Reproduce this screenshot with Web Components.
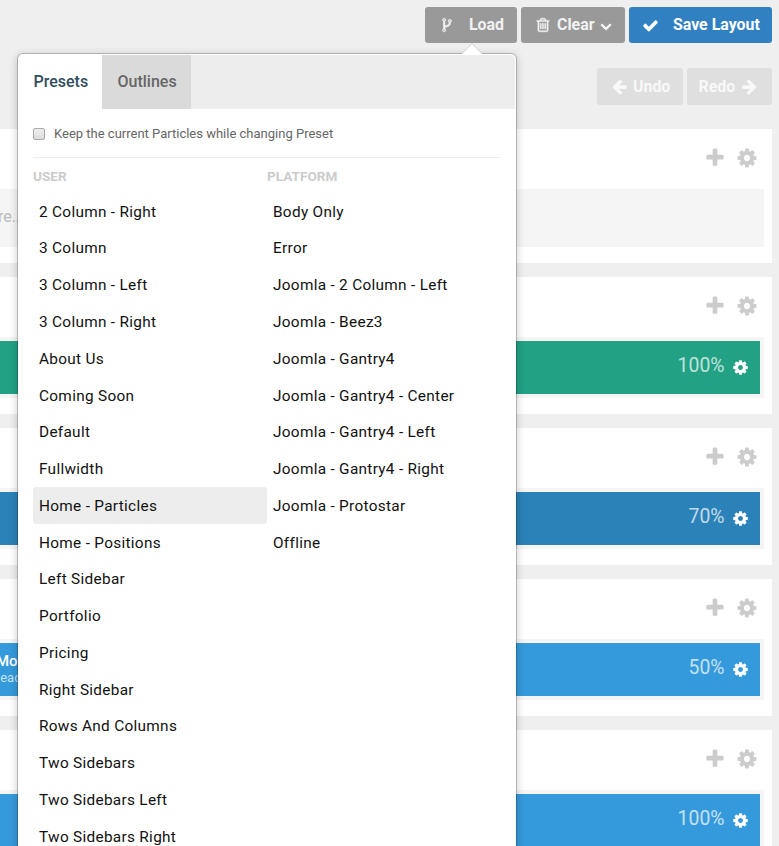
<!DOCTYPE html>
<html lang="en">
<head>
<meta charset="utf-8">
<title>Layout Manager</title>
<style>
html,body{margin:0;height:846px;overflow:hidden;background:#efefef;font-family:Roboto,"Liberation Sans",sans-serif}
</style>
</head>
<body>
<layout-page></layout-page>
<script>
const ICONS = {
plus:'M1600 736v192q0 40-28 68t-68 28h-416v416q0 40-28 68t-68 28h-192q-40 0-68-28t-28-68v-416h-416q-40 0-68-28t-28-68v-192q0-40 28-68t68-28h416v-416q0-40 28-68t68-28h192q40 0 68 28t28 68v416h416q40 0 68 28t28 68z',
cog:'M1152 896q0-106-75-181t-181-75-181 75-75 181 75 181 181 75 181-75 75-181zm512-109v222q0 12-8 23t-20 13l-185 28q-19 54-39 91 35 50 107 138 10 12 10 25t-9 23q-27 37-99 108t-94 71q-12 0-26-9l-138-108q-44 23-91 38-16 136-29 186-7 28-36 28h-222q-14 0-24.5-8.5t-11.5-21.5l-28-184q-49-16-90-37l-141 107q-10 9-25 9-14 0-25-11-126-114-165-168-7-10-7-23 0-12 8-23 15-21 51-66.5t54-70.5q-27-50-41-99l-183-27q-13-2-21-12.5t-8-23.5v-222q0-12 8-23t19-13l186-28q14-46 39-92-40-57-107-138-10-12-10-24 0-10 9-23 26-36 98.5-107.5t94.5-71.5q13 0 26 10l138 107q44-23 91-38 16-136 29-186 7-28 36-28h222q14 0 24.5 8.5t11.5 21.5l28 184q49 16 90 37l142-107q9-9 24-9 13 0 25 10 129 119 165 170 7 8 7 22 0 12-8 23-15 21-51 66.5t-54 70.5q26 50 41 98l183 28q13 2 21 12.5t8 23.5z',
check:'M1671 566q0 40-28 68l-724 724-136 136q-28 28-68 28t-68-28l-136-136-362-362q-28-28-28-68t28-68l136-136q28-28 68-28t68 28l294 295 656-657q28-28 68-28t68 28l136 136q28 28 28 68z',
left:'M1664 896v128q0 53-32.5 90.5t-84.5 37.5h-704l293 294q38 36 38 90t-38 90l-75 76q-37 37-90 37-52 0-91-37l-651-652q-37-37-37-90 0-52 37-91l651-650q38-38 91-38 52 0 90 38l75 74q38 38 38 91t-38 91l-293 293h704q52 0 84.5 37.5t32.5 90.5z',
fork:'M672 1472q0-40-28-68t-68-28-68 28-28 68 28 68 68 28 68-28 28-68zm0-1152q0-40-28-68t-68-28-68 28-28 68 28 68 68 28 68-28 28-68zm640 128q0-40-28-68t-68-28-68 28-28 68 28 68 68 28 68-28 28-68zm96 0q0 52-26 96.5t-70 69.5q-2 287-226 414-67 38-203 81-128 40-169.5 71t-41.5 100v26q44 25 70 69.5t26 96.5q0 80-56 136t-136 56-136-56-56-136q0-52 26-96.5t70-69.5v-820q-44-25-70-69.5t-26-96.5q0-80 56-136t136-56 136 56 56 136q0 52-26 96.5t-70 69.5v497q54-26 154-57 55-17 87.5-29.5t70.5-31 59-39.5 40.5-51 28-69.5 8.5-91.5q-44-25-70-69.5t-26-96.5q0-80 56-136t136-56 136 56 56 136z',
trash:'M704 736v576q0 14-9 23t-23 9h-64q-14 0-23-9t-9-23v-576q0-14 9-23t23-9h64q14 0 23 9t9 23zm256 0v576q0 14-9 23t-23 9h-64q-14 0-23-9t-9-23v-576q0-14 9-23t23-9h64q14 0 23 9t9 23zm256 0v576q0 14-9 23t-23 9h-64q-14 0-23-9t-9-23v-576q0-14 9-23t23-9h64q14 0 23 9t9 23zm128 724v-948h-896v948q0 22 7 40.5t14.5 27 10.5 8.5h832q3 0 10.5-8.5t14.5-27 7-40.5zm-672-1076h448l-48-117q-7-9-17-11h-317q-10 2-17 11zm928 32v64q0 14-9 23t-23 9h-96v948q0 83-47 143.5t-113 60.5h-832q-66 0-113-58.5t-47-141.5v-952h-96q-14 0-23-9t-9-23v-64q0-14 9-23t23-9h309l70-167q15-37 54-63t79-26h320q40 0 79 26t54 63l70 167h309q14 0 23 9t9 23z',
down:'M1683 808l-742 741q-19 19-45 19t-45-19l-742-741q-19-19-19-45.5t19-45.5l166-165q19-19 45-19t45 19l531 531 531-531q19-19 45-19t45 19l166 165q19 19 19 45.5t-19 45.5z'
};
function define(name, render){
  customElements.define(name, class extends HTMLElement{
    constructor(){ super(); this.attachShadow({mode:'open'}); }
    connectedCallback(){ this.shadowRoot.innerHTML = render(this); }
  });
}
define('fa-icon', e => {
  const n = e.getAttribute('name'), s = e.getAttribute('size') || 16;
  const flip = n === 'right' ? ' style="transform:scaleX(-1)"' : '';
  const bold = n === 'fork' || n === 'trash' ? ' stroke="currentColor" stroke-width="50"' : '';
  return `<style>:host{display:block;flex:none;width:${s}px;height:${s}px}svg{display:block}</style>
  <svg width="${s}" height="${s}" viewBox="0 0 1792 1792" fill="currentColor"${flip}${bold}><path d="${ICONS[n === 'right' ? 'left' : n]}"/></svg>`;
});
define('tool-button', e => `<style>
:host{display:flex;box-sizing:border-box;align-items:center;height:36px;border-radius:3px;background:#999;color:#f2f2f2;font-weight:700;font-size:15.9px;line-height:36px;white-space:nowrap}
:host([kind=primary]){background:#3180c2;color:#fff}
:host([kind=disabled]){background:#dfdfdf;color:#f8f8f8;height:37px}
</style><slot></slot>`);
define('layout-section', e => `<style>
:host{display:block;box-sizing:border-box;width:772px;height:137px;background:#fff;margin-bottom:14px;padding-top:18px}
:host([empty]){height:134px}
header{display:flex;justify-content:flex-end;gap:10px;padding-right:14px;color:#ccc;height:42px}
.grid{box-sizing:border-box;background:#f5f5f5;margin-right:8px;height:61px;padding:4px 4px 4px 0}
:host([empty]) .grid{height:58px;padding:0}
</style><header><fa-icon name="plus" size="22"></fa-icon><fa-icon name="cog" size="22"></fa-icon></header><div class="grid"><slot></slot></div>`);
define('layout-block', e => `<style>
:host{display:flex;box-sizing:border-box;height:53px;align-items:center;padding-right:11px;color:#fff;background:${e.getAttribute('color')}}
.title{flex:1}
.size{font-size:19.4px;line-height:24px;opacity:.7;padding-bottom:3px;margin-right:7.5px}
</style><div class="title"><slot></slot></div><span class="size">${e.getAttribute('size')}</span><fa-icon name="cog" size="17"></fa-icon>`);
define('block-title', () => `<style>
:host{display:block;margin-left:-4px;font-size:15px;line-height:18px;font-weight:500;padding-bottom:2px}
::slotted(small){display:block;margin-left:-3px;font-size:13px;line-height:15px;font-weight:400;opacity:.7}
</style><slot></slot>`);
define('drop-hint', () => `<style>:host{display:block;font-size:16px;line-height:56px;color:#bbb;margin-left:-2px}</style><slot></slot>`);
define('preset-item', () => `<style>
:host{display:block;box-sizing:border-box;height:36.78px;line-height:38px;padding-left:6px;border-radius:3px;font-size:15.36px;letter-spacing:.3px;color:#111;white-space:nowrap}
:host([active]){background:#ededed}
</style><slot></slot>`);
define('preset-column', e => `<style>
:host{display:block;width:234px}
h4{margin:0 0 5.7px;font-size:13.6px;line-height:21px;font-weight:700;color:#ccc}
</style><h4>${e.getAttribute('heading')}</h4>${e.getAttribute('items').split('|').map(t =>
 `<preset-item${t === e.getAttribute('active') ? ' active' : ''}>${t}</preset-item>`).join('')}`);
define('check-option', () => `<style>
:host{display:flex;align-items:center;height:48px;border-bottom:1px solid #eee;font-size:13px;color:#666}
i{box-sizing:border-box;width:12px;height:12px;border:1px solid #aaa;border-radius:2px;background:linear-gradient(#eee,#ddd);margin:1px 9px 0 0}
</style><i></i><span><slot></slot></span>`);
define('preset-popover', () => `<style>
:host{position:absolute;left:17px;top:53px;box-sizing:border-box;width:500px;height:830px;background:#fff;background-clip:padding-box;border:1px solid rgba(0,0,0,.2);border-radius:6px;padding:1px;box-shadow:0 2px 8px rgba(0,0,0,.2)}
.arrow{position:absolute;left:444px;top:-11px}
nav{display:flex;background:#ededed;height:54px;line-height:54px;font-size:16px;font-weight:500;color:#666;border-radius:5px 5px 0 0}
nav b{font-weight:500;box-sizing:border-box}
.on{width:83px;padding-left:14.5px;background:#fff;color:#314d5e;border-radius:5px 0 0 0}
.off{width:89px;padding-left:15.5px;background:#dadada}
main{padding:0 14px}
.cols{display:flex;padding-top:8px}
</style>
<svg class="arrow" width="20" height="12"><path d="M0 11L10 1 20 11V12H0z" fill="#fff"/><path d="M0 10.5L10 .5 20 10.5" fill="none" stroke="#d2d2d2"/></svg>
<nav><b class="on">Presets</b><b class="off">Outlines</b></nav>
<main><check-option>Keep the current Particles while changing Preset</check-option>
<div class="cols">
<preset-column heading="USER" active="Home - Particles" items="2 Column - Right|3 Column|3 Column - Left|3 Column - Right|About Us|Coming Soon|Default|Fullwidth|Home - Particles|Home - Positions|Left Sidebar|Portfolio|Pricing|Right Sidebar|Rows And Columns|Two Sidebars|Two Sidebars Left|Two Sidebars Right"></preset-column>
<preset-column heading="PLATFORM" items="Body Only|Error|Joomla - 2 Column - Left|Joomla - Beez3|Joomla - Gantry4|Joomla - Gantry4 - Center|Joomla - Gantry4 - Left|Joomla - Gantry4 - Right|Joomla - Protostar|Offline"></preset-column>
</div></main>`);
define('layout-page', () => `<style>
:host{display:block;position:relative;width:779px;height:846px;overflow:hidden;background:#efefef}
.bar{display:flex;justify-content:flex-end;gap:4px;padding:7px 7px 0 0}
.history{padding-top:25px;margin-bottom:24px}
.load{width:92px;padding-left:14px}.load span{margin-left:14px}
.clear{width:104px;padding-left:14px}.clear span{margin:0 5px 0 6px}
.clear fa-icon+span+fa-icon{padding-top:2px}
.save{width:143px;padding-left:13px}.save span{margin-left:14px}
.undo{width:86px;padding-left:14px}.undo span{margin-left:5px}
.redo{width:85px;padding-left:11.5px}.redo span{margin-right:6px}
</style>
<div class="bar">
<tool-button class="load"><fa-icon name="fork" size="16"></fa-icon><span>Load</span></tool-button>
<tool-button class="clear"><fa-icon name="trash" size="16"></fa-icon><span>Clear</span><fa-icon name="down" size="12"></fa-icon></tool-button>
<tool-button class="save" kind="primary"><fa-icon name="check" size="17"></fa-icon><span>Save Layout</span></tool-button>
</div>
<div class="bar history">
<tool-button class="undo" kind="disabled"><fa-icon name="left" size="17"></fa-icon><span>Undo</span></tool-button>
<tool-button class="redo" kind="disabled"><span>Redo</span><fa-icon name="right" size="17"></fa-icon></tool-button>
</div>
<layout-section empty><drop-hint>re...</drop-hint></layout-section>
<layout-section><layout-block color="#22a185" size="100%"></layout-block></layout-section>
<layout-section><layout-block color="#2b82b8" size="70%"></layout-block></layout-section>
<layout-section><layout-block color="#359adb" size="50%"><block-title>Mo<small>head</small></block-title></layout-block></layout-section>
<layout-section><layout-block color="#359adb" size="100%"></layout-block></layout-section>
<preset-popover></preset-popover>`);
</script>
</body>
</html>
